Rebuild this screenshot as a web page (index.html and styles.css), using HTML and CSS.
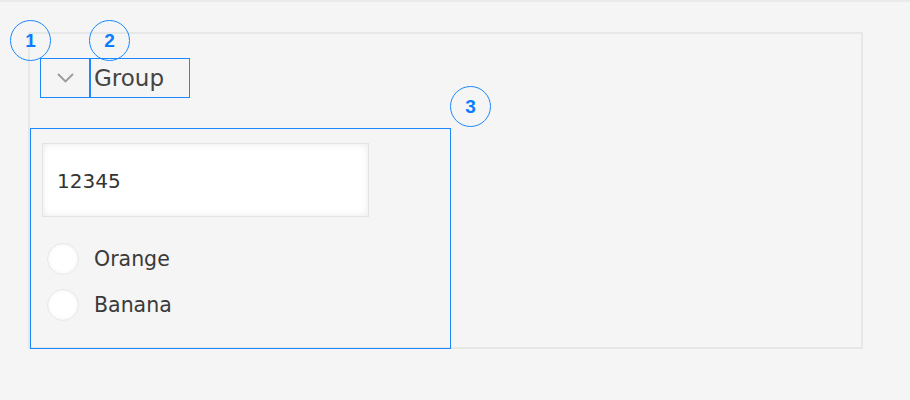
FILE: index.html
```html
<!DOCTYPE html>
<html lang="en">
<head>
    <meta charset="UTF-8">
    <meta name="viewport" content="width=device-width, initial-scale=1.0">
    <title>Group field</title>
    <link rel="stylesheet" href="styles.css">
</head>
<body>
    <main class="page">
        <!-- Group field -->
        <div class="group">
            <div class="group-header">
                <button type="button" class="group-toggle marked">
                    <svg width="17" height="10" viewBox="0 0 17 10"><path d="M1 1 L8.5 8.5 L16 1" fill="none" stroke="#9a9a9a" stroke-width="1.8"/></svg>
                    <span class="badge">1</span>
                </button>
                <div class="group-label marked">
                    Group
                    <span class="badge">2</span>
                </div>
            </div>

            <div class="group-body marked">
                <span class="badge badge-body">3</span>
                <div class="text-input">12345</div>
                <label class="radio"><span class="radio-dot"></span>Orange</label>
                <label class="radio"><span class="radio-dot"></span>Banana</label>
            </div>
        </div>
    </main>
</body>
</html>
```

FILE: styles.css
```css
body {
    font-family: "DejaVu Sans", sans-serif;
    margin: 0;
    padding: 0;
    background-color: #f5f5f5;
    border-top: 2px solid #e9ebeb;
    color: #333;
}
.page {
    padding: 30px 0 0 28px;
}
.group {
    width: 831px;
    height: 313px;
    border: 2px solid #e6e8e8;
    display: flex;
    flex-direction: column;
}
.group-header {
    display: flex;
    flex-shrink: 0;
    padding: 24px 0 0 10px;
}
.marked {
    outline: 1px solid #1a88ff;
    outline-offset: -1px;
    position: relative;
}
.group-toggle {
    width: 50px;
    height: 40px;
    border: none;
    background: none;
    padding: 0;
    display: flex;
    align-items: center;
    justify-content: center;
    cursor: pointer;
}
.group-label {
    width: 100px;
    height: 40px;
    box-sizing: border-box;
    padding: 0 0 0 4px;
    font-size: 23px;
    line-height: 40px;
    color: #444;
}
.badge {
    position: absolute;
    width: 39px;
    height: 39px;
    border: 1px solid #1a88ff;
    border-radius: 50%;
    top: -38px;
    left: -30px;
    font-family: "Liberation Sans", Arial, sans-serif;
    font-weight: bold;
    font-size: 19px;
    line-height: 39px;
    text-align: center;
    color: #0a7cff;
}
.group-label .badge {
    left: -1px;
}
.group-body {
    width: 421px;
    height: 221px;
    flex-shrink: 0;
    box-sizing: border-box;
    margin-top: 30px;
    padding: 15px 0 0 12px;
}
.badge.badge-body {
    top: -42px;
    left: auto;
    right: -40px;
}
.text-input {
    width: 311px;
    height: 72px;
    border: 1px solid #e3e5e5;
    background-color: #fff;
    box-shadow: inset 0 0 7px rgba(0, 0, 0, 0.09);
    box-sizing: content-box;
    padding: 0 0 0 14px;
    font-size: 20px;
    line-height: 74px;
    color: #333;
    margin-bottom: 26px;
}
.radio {
    display: flex;
    align-items: center;
    gap: 15px;
    height: 32px;
    margin: 0 0 14px 5px;
    font-size: 20.5px;
    color: #3a3a3a;
}
.radio-dot {
    width: 30px;
    height: 30px;
    border: 1px solid #e6e8e8;
    border-radius: 50%;
    background-color: #fff;
    box-shadow: inset 0 0 4px rgba(0, 0, 0, 0.06);
}
```
